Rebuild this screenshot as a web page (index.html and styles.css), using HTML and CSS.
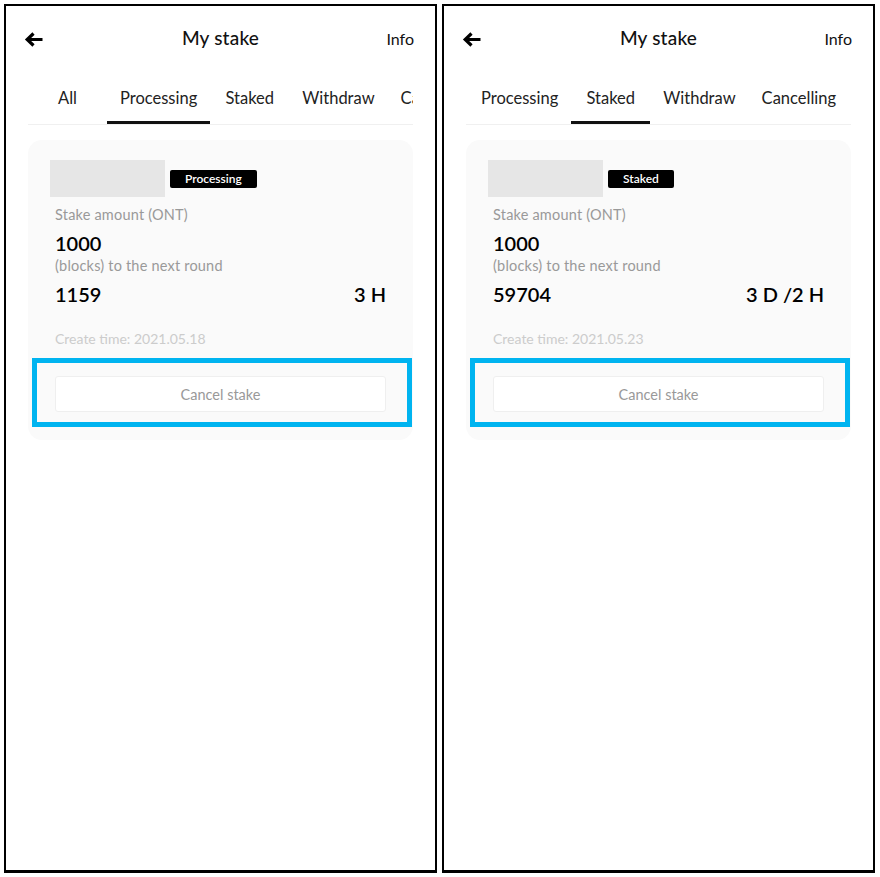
FILE: index.html
```html
<!DOCTYPE html>
<html>
<head>
<meta charset="utf-8">
<link rel="stylesheet" href="styles.css">
</head>
<body>
<div class="screens">
  <section class="phone">
    <header class="topbar">
      <svg class="back" width="19" height="15" viewBox="0 0 19 15"><path d="M18.5 7.5H3.5M9.5 1.5L3.2 7.5L9.5 13.5" fill="none" stroke="#000" stroke-width="3.2"/></svg>
      <h1 class="title">My stake</h1>
      <span class="info">Info</span>
    </header>
    <nav class="tabs">
      <span class="tab">All</span>
      <span class="tab active">Processing</span>
      <span class="tab">Staked</span>
      <span class="tab">Withdraw</span>
      <span class="tab">Cancelling</span>
    </nav>
    <div class="card">
      <div class="card-head">
        <div class="placeholder"></div>
        <span class="badge">Processing</span>
      </div>
      <div class="body">
        <div class="label">Stake amount (ONT)</div>
        <div class="value">1000</div>
        <div class="label tight">(blocks) to the next round</div>
        <div class="value row"><span>1159</span><span>3 H</span></div>
        <div class="created">Create time: 2021.05.18</div>
        <div class="footer">
          <button class="cancel">Cancel stake</button>
          <div class="highlight"></div>
        </div>
      </div>
    </div>
  </section>
  <section class="phone">
    <header class="topbar">
      <svg class="back" width="19" height="15" viewBox="0 0 19 15"><path d="M18.5 7.5H3.5M9.5 1.5L3.2 7.5L9.5 13.5" fill="none" stroke="#000" stroke-width="3.2"/></svg>
      <h1 class="title">My stake</h1>
      <span class="info">Info</span>
    </header>
    <nav class="tabs scrolled">
      <span class="tab">Processing</span>
      <span class="tab active">Staked</span>
      <span class="tab">Withdraw</span>
      <span class="tab">Cancelling</span>
    </nav>
    <div class="card">
      <div class="card-head">
        <div class="placeholder"></div>
        <span class="badge">Staked</span>
      </div>
      <div class="body">
        <div class="label">Stake amount (ONT)</div>
        <div class="value">1000</div>
        <div class="label tight">(blocks) to the next round</div>
        <div class="value row"><span>59704</span><span>3 D /2 H</span></div>
        <div class="created">Create time: 2021.05.23</div>
        <div class="footer">
          <button class="cancel">Cancel stake</button>
          <div class="highlight"></div>
        </div>
      </div>
    </div>
  </section>
</div>
</body>
</html>
```
FILE: styles.css
```css
* { box-sizing: border-box; }
html, body { margin: 0; padding: 0; background: #fff; }
body { font-family: Lato, "Liberation Sans", sans-serif; color: #111; }
.screens { display: flex; gap: 5px; padding: 4px 0 0 4px; }
.phone {
  width: 433px; height: 869px;
  border: 2px solid #000; border-bottom-width: 3px;
  padding: 0 22px;
  background: #fff;
}
.topbar {
  position: relative;
  height: 68px;
  display: flex; align-items: center; justify-content: center;
}
.back { position: absolute; left: -4px; top: 26px; }
.title { margin: 0 0 4px; font-size: 19px; font-weight: 500; letter-spacing: 0.2px; line-height: 24px; }
.info { position: absolute; right: -1px; top: 23px; font-size: 16px; line-height: 20px; }
.tabs {
  display: flex; overflow: hidden; white-space: nowrap;
  border-bottom: 1px solid #f0f0f0;
}
.tabs.scrolled { padding-left: 2px; }
.tab {
  flex: none;
  min-width: 79px; text-align: center;
  padding: 14px 13px 13px;
  font-size: 16.5px; line-height: 20px; color: #222;
  border-bottom: 3px solid transparent;
}
.tab.active { border-bottom-color: #111; }
.card {
  margin-top: 15px;
  background: #fafafa;
  border-radius: 14px;
  padding: 20px 27px 28px;
}
.card-head { display: flex; align-items: center; gap: 5px; margin-left: -5px; }
.placeholder { width: 115px; height: 37px; background: #e6e6e6; }
.badge {
  background: #000; color: #fff;
  font-size: 12px; font-weight: 600; line-height: 18px;
  padding: 0 15px; border-radius: 2px;
  margin-top: 1px;
}
.label { margin-top: 9px; font-size: 14.5px; line-height: 18px; color: #999; letter-spacing: 0.2px; }
.label.tight { margin-top: 1px; }
.value { margin-top: 6px; font-size: 20px; font-weight: 600; line-height: 26px; color: #000; }
.row { display: flex; justify-content: space-between; }
.created { margin-top: 23px; font-size: 14px; line-height: 18px; color: #ccc; }
.footer { position: relative; margin-top: 28px; }
.cancel {
  display: block; width: 100%; height: 36px;
  background: #fff; border: 1px solid #efefef; border-radius: 3px;
  font-family: inherit; font-size: 14.5px; color: #999;
}
.highlight {
  position: absolute; left: -23px; right: -26px; top: -18px; bottom: -15px;
  border: 5px solid #00b4f0;
  pointer-events: none;
}
```
